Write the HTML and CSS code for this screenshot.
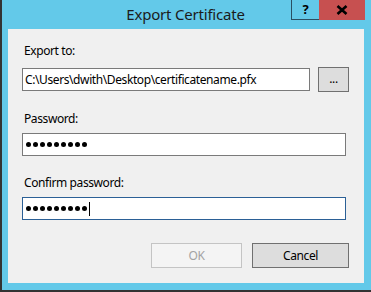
FILE: index.html
```html
<!DOCTYPE html>
<html lang="en">
  <head>
    <meta charset="UTF-8" />
    <meta name="viewport" content="width=device-width, initial-scale=1.0" />
    <title>Export Certificate</title>
    <link rel="stylesheet" href="styles.css">
  </head>
  <body>
    <div class="window">
      <div class="titlebar">
        <div class="title">Export Certificate</div>
        <div class="controls">
          <div class="btn-help">?</div>
          <div class="btn-close">
            <svg width="12" height="10" viewBox="0 0 12 10">
              <path d="M1.5 1 L10.5 9 M10.5 1 L1.5 9" stroke="#000" stroke-width="2.6" />
            </svg>
          </div>
        </div>
      </div>

      <div class="client">
        <div class="label first">Export to:</div>
        <div class="row">
          <div class="field path">C:\Users\dwith\Desktop\certificatename.pfx</div>
          <div class="browse">...</div>
        </div>

        <div class="label">Password:</div>
        <div class="field dots">
          <span></span><span></span><span></span><span></span><span></span><span></span><span></span><span></span><span></span>
        </div>

        <div class="label">Confirm password:</div>
        <div class="field dots focused">
          <span></span><span></span><span></span><span></span><span></span><span></span><span></span><span></span><span></span>
          <i class="caret"></i>
        </div>

        <div class="actions">
          <div class="button disabled">OK</div>
          <div class="button cancel">Cancel</div>
        </div>
      </div>
      <div class="bottom-frame"></div>
    </div>
  </body>
</html>
```

FILE: styles.css
```css
body {
  margin: 0;
  font-family: "Noto Sans", "Open Sans", Arial, sans-serif;
  font-size: 12px;
  letter-spacing: -0.4px;
  color: #000;
}
.window {
  width: 371px;
  height: 292px;
  box-sizing: border-box;
  background: #63c9e9;
  border-left: 2px solid #333;
  border-bottom: 2px solid #333;
  display: flex;
  flex-direction: column;
}
.titlebar {
  height: 29px;
  display: grid;
  margin-left: -2px;
}
.title {
  grid-area: 1 / 1;
  justify-self: center;
  font-size: 15px;
  letter-spacing: -0.2px;
  line-height: 20px;
  padding-top: 4px;
  color: #1b1b1b;
}
.controls {
  grid-area: 1 / 1;
  justify-self: end;
  align-self: start;
  display: flex;
  margin-right: 6px;
}
.btn-help {
  width: 27px;
  height: 19px;
  border-left: 1px solid #2a4f63;
  border-bottom: 1px solid #2a4f63;
  text-align: center;
  font-weight: bold;
  font-size: 13px;
  line-height: 19px;
}
.btn-close {
  width: 46px;
  height: 20px;
  background: #c75050;
  display: flex;
  align-items: center;
  justify-content: center;
}
.client {
  height: 254px;
  margin: 0 7px 0 6px;
  background: #f0f0f0;
  box-sizing: border-box;
  padding: 14px 18px 0 14px;
  display: flex;
  flex-direction: column;
}
.bottom-frame {
  flex: 1;
}
.label {
  line-height: 16px;
  padding-left: 2px;
  margin-top: 19px;
  margin-bottom: 6px;
}
.label.first {
  margin-top: 0;
  margin-bottom: 8px;
}
.row {
  display: flex;
  align-items: center;
  gap: 8px;
  margin-right: -3px;
}
.field {
  height: 23px;
  box-sizing: border-box;
  border: 1px solid #7a7a7a;
  background: #fff;
  padding: 0 2px;
  line-height: 21px;
  display: flex;
  align-items: center;
}
.path {
  width: 288px;
}
.browse {
  width: 31px;
  height: 25px;
  box-sizing: border-box;
  border: 1px solid #707070;
  background: #dddddd;
  text-align: center;
  line-height: 21px;
}
.dots {
  gap: 2px;
  padding-left: 3px;
}
.dots span {
  width: 5px;
  height: 5px;
  border-radius: 50%;
  background: #000;
}
.focused {
  border-color: #2b6096;
}
.caret {
  width: 1px;
  height: 14px;
  background: #000;
}
.actions {
  display: flex;
  justify-content: flex-end;
  gap: 10px;
  margin-top: 23px;
  margin-right: -3px;
}
.button {
  height: 25px;
  box-sizing: border-box;
  text-align: center;
  line-height: 23px;
}
.disabled {
  width: 91px;
  border: 1px solid #c4c4c4;
  background: #f4f4f4;
  color: #a3a3a3;
}
.cancel {
  width: 97px;
  border: 1px solid #707070;
  background: #dddddd;
}
```
